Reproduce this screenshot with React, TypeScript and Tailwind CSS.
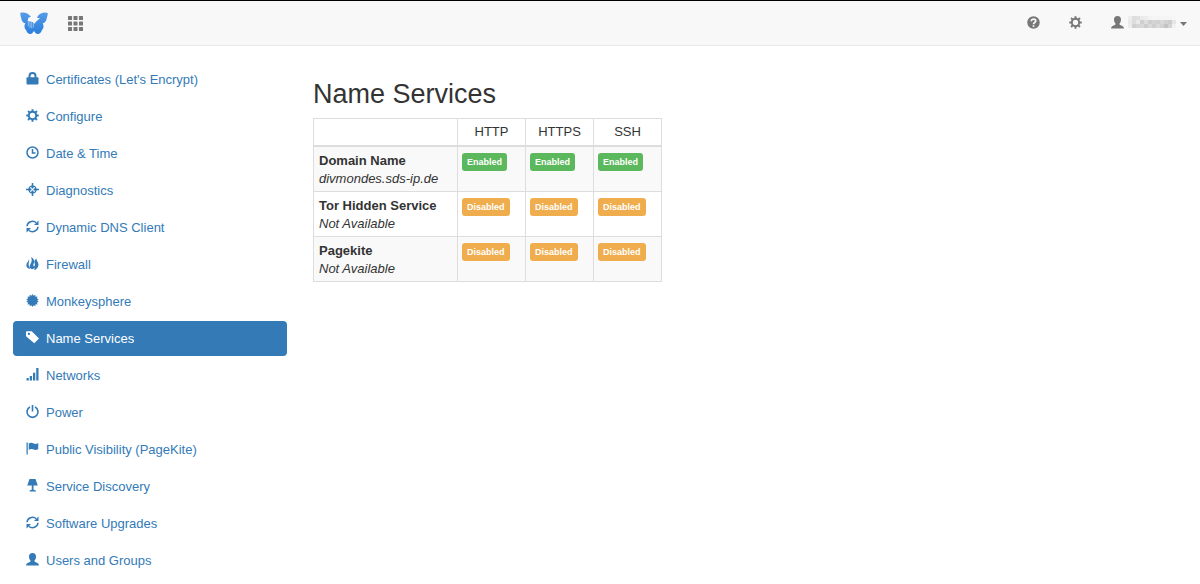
import React from "react";

type IconName =
  | "lock" | "cog" | "time" | "screenshot" | "refresh" | "fire" | "certificate" | "tag"
  | "signal" | "off" | "flag" | "lamp" | "user" | "question" | "grid";

const burst = Array.from({ length: 28 }, (_, i) => {
  const r = i % 2 === 0 ? 13 : 9.5;
  const a = (i * Math.PI) / 14;
  return `${(13 + r * Math.sin(a)).toFixed(2)},${(13 - r * Math.cos(a)).toFixed(2)}`;
}).join(" ");

const shapes: Record<IconName, React.ReactNode> = {
  lock: (
    <>
      <rect x="1" y="10.5" width="24" height="14.5" rx="2" />
      <path d="M7 12V8a6 6 0 0 1 12 0V12" fill="none" stroke="currentColor" strokeWidth="4" />
    </>
  ),
  cog: (
    <g fill="none" stroke="currentColor">
      <circle cx="13" cy="13" r="7.4" strokeWidth="4" />
      {[0, 45, 90, 135, 180, 225, 270, 315].map((a) => (
        <path key={a} d="M13 .5v5" strokeWidth="4" transform={`rotate(${a} 13 13)`} />
      ))}
    </g>
  ),
  time: (
    <g fill="none" stroke="currentColor">
      <circle cx="13" cy="13" r="11" strokeWidth="3" />
      <path d="M13 6v8h6" strokeWidth="3" />
    </g>
  ),
  screenshot: (
    <>
      <circle cx="13" cy="13" r="7" fill="none" stroke="currentColor" strokeWidth="2.4" />
      <path d="M11.500 0h3v5l2 2-2.500 4h-2L9.500 7l2-2zM11.500 26h3v-5l2-2-2.500-4h-2l-2.500 4 2 2zM0 11.500v3h5l2 2 4-2.500v-2L7 9.500l-2 2zM26 11.500v3h-5l-2 2-4-2.500v-2l4-2.500 2 2z" />
    </>
  ),
  refresh: (
    <>
      <path d="M2 12.500A11 10.500 0 0 1 20.500 5.500M24 13.500A11 10.500 0 0 1 5.500 20.500" fill="none" stroke="currentColor" strokeWidth="3" />
      <path d="M25 1v9h-9zM1 25v-9h9z" />
    </>
  ),
  fire: (
    <path d="M10 0c6 3 8 8 5.500 13-1.500 3-1 4.500.5 6 2-1.500 2.500-4 1-7-.5-3.500.5-7 4-9 0 3 1 4.500 2.500 7 3 5 1.500 11-4.500 15.500h-3c1-1.500 1.500-3 1.200-4.500-1.200 2-3 3.200-5.200 3.500-4.500-1.500-5.500-4.500-4-8.500C10.500 11.500 13 7.500 10 0zM6 4c1.500 4-1 7-.8 11 .2 3.500 2.300 6 3.300 9C3 23 0 19.500.8 14.500 1.500 10.500 6 9 6 4z" />
  ),
  certificate: <polygon points={burst} />,
  tag: <path fillRule="evenodd" d="M0 2.500A2 2 0 0 1 2 .5h9.500L26 15l-9.500 9.500L0 10.500zM5.800 3.500a2.300 2.300 0 1 0 0 4.600 2.300 2.300 0 0 0 0-4.600z" />,
  signal: <path d="M1 20h4.500v5H1zM7.500 16h4.500v9H7.500zM14 9.500h4.500V25H14zM20.500 0H25v25h-4.500z" />,
  off: (
    <g fill="none" stroke="currentColor" strokeWidth="3.200">
      <path d="M8 4a11 11 0 1 0 10 0" />
      <path d="M13 0v13" />
    </g>
  ),
  flag: <path d="M1 1h2.500v24H1zM5.500 3c4-2.500 7-1.500 10 0s6 1 9-1v12c-3 2-6 2.500-9 1s-6-2-10 .5z" />,
  lamp: <path d="M7 0h12l4.500 13H15v8.500c3.500.3 5 1.500 5 3.500H7c0-2 1.500-3.200 4.500-3.500V13h-9z" />,
  user: <path d="M13 0c4.500 0 7 2.500 7 7 0 3.500-1 6-3 8 0 2 .5 3 2.500 3.600 4 1.400 6 3 6.500 6.400H0c.5-3.400 2.500-5 6.500-6.400C8.500 18 9 17 9 15c-2-2-3-4.500-3-8 0-4.500 2.500-7 7-7z" />,
  question: (
    <>
      <circle cx="13" cy="13" r="12.500" />
      <path d="M8.500 10.500c0-6 9-5.500 9-.5 0 3-4.500 3-4.500 6.500" fill="none" stroke="#f8f8f8" strokeWidth="3.400" />
      <path d="M11.300 18.500h3.500v3.300h-3.500z" fill="#f8f8f8" />
    </>
  ),
  grid: (
    <>
      {[0, 9.5, 19].map((y) =>
        [0, 9.5, 19].map((x) => <rect key={`${x}-${y}`} x={x} y={y} width="7" height="7" rx="1" />)
      )}
    </>
  ),
};

function Icon({ name, className = "size-[13px]" }: { name: IconName; className?: string }) {
  return (
    <svg viewBox="0 0 26 26" fill="currentColor" aria-hidden="true" className={`shrink-0 overflow-visible ${className}`}>
      {shapes[name]}
    </svg>
  );
}

function Logo() {
  return (
    <svg viewBox="0 0 84 66" aria-hidden="true" className="h-[22px] w-7">
      <defs>
        <linearGradient id="wing" x1="0" y1="0" x2="0" y2="1">
          <stop offset="0" stopColor="#569ce6" />
          <stop offset="1" stopColor="#2a7edc" />
        </linearGradient>
      </defs>
      <path
        fill="url(#wing)"
        d="M1 3C11-1 25 4 33 14L25 17 23 27 38 30 43 35 50 27 60 19 51 17 54 11C62 3 74-1 83 3C84 10 80 18 79 24C77 30 73 33 68 34C73 42 70 50 66 54C62 66 52 69 46 62L42 57 38 62C32 69 22 66 18 54C14 50 11 42 16 34C11 33 7 30 5 24C4 18 0 10 1 3z"
      />
      <path d="M25 26v17M30 28v20M35 30v19M40 33v14" stroke="#c4dcf8" strokeWidth="1.800" fill="none" />
    </svg>
  );
}

const mask = [
  ["#eeeeee", "#dedede", "#e0e0e0", "#ebebeb", "#ededed", "#f3f3f3", "#f5f5f5", "#f5f5f5", "#f5f5f5", "#f5f5f5", "#f5f5f5", "#f6f6f6"],
  ["#e9e9e9", "#dddddd", "#e9e9e9", "#cfcfcf", "#dddddd", "#cfcfcf", "#d4d4d4", "#d0d0d0", "#d8d8d8", "#d2d2d2", "#cccccc", "#e6e6e6"],
  ["#ececec", "#d0d0d0", "#d5d5d5", "#d8d8d8", "#cccccc", "#d9d9d9", "#cfcfcf", "#dadada", "#d2d2d2", "#c3c3c3", "#d4d4d4", "#f1f1f1"],
];

function HiddenName() {
  return (
    <svg viewBox="0 0 48 12" role="img" aria-label="User" className="h-3 w-12">
      {mask.map((row, y) => row.map((c, x) => <rect key={`${x}-${y}`} x={x * 4} y={y * 4} width="4" height="4" fill={c} />))}
    </svg>
  );
}

const items: { icon: IconName; label: string; active?: boolean }[] = [
  { icon: "lock", label: "Certificates (Let's Encrypt)" },
  { icon: "cog", label: "Configure" },
  { icon: "time", label: "Date & Time" },
  { icon: "screenshot", label: "Diagnostics" },
  { icon: "refresh", label: "Dynamic DNS Client" },
  { icon: "fire", label: "Firewall" },
  { icon: "certificate", label: "Monkeysphere" },
  { icon: "tag", label: "Name Services", active: true },
  { icon: "signal", label: "Networks" },
  { icon: "off", label: "Power" },
  { icon: "flag", label: "Public Visibility (PageKite)" },
  { icon: "lamp", label: "Service Discovery" },
  { icon: "refresh", label: "Software Upgrades" },
  { icon: "user", label: "Users and Groups" },
];

const services = [
  { type: "Domain Name", name: "divmondes.sds-ip.de", enabled: true },
  { type: "Tor Hidden Service", name: "Not Available", enabled: false },
  { type: "Pagekite", name: "Not Available", enabled: false },
];

const protocols = ["HTTP", "HTTPS", "SSH"];

function Status({ enabled }: { enabled: boolean }) {
  return (
    <span
      className={`block w-fit rounded-[3px] px-[5px] text-[9px] font-bold leading-[18px] text-white ${
        enabled ? "bg-[#5cb85c]" : "bg-[#f0ad4e]"
      }`}
    >
      {enabled ? "Enabled" : "Disabled"}
    </span>
  );
}

export default function App() {
  return (
    <div className="bg-white font-['Liberation_Sans',Arial,sans-serif] text-[13px] leading-[18px] text-[#333]">
      <header className="flex h-[46px] items-center justify-between border-t border-b border-t-black border-b-[#e7e7e7] bg-[#f8f8f8] pr-3 pl-5 text-[#777]">
        <nav aria-label="Main" className="flex items-center gap-5">
          <a href="#home" aria-label="FreedomBox"><Logo /></a>
          <a href="#apps" aria-label="Apps"><Icon name="grid" className="size-[15px]" /></a>
        </nav>
        <nav aria-label="Account" className="flex items-center pb-0.5">
          <a href="#help" aria-label="Help" className="mr-[29px]"><Icon name="question" /></a>
          <a href="#system" aria-label="System" className="mr-[29px]"><Icon name="cog" /></a>
          <button type="button" className="flex items-center gap-1">
            <Icon name="user" />
            <HiddenName />
            <svg viewBox="0 0 8 4" aria-hidden="true" className="mt-1 h-1 w-2"><path d="M0 0h7L3.500 4z" fill="currentColor" /></svg>
          </button>
        </nav>
      </header>

      <div className="flex pt-4">
        <nav aria-label="System" className="w-1/4 px-[13px]">
          <ul className="flex flex-col gap-0.5">
            {items.map((item) => (
              <li key={item.label}>
                <a
                  href="#section"
                  aria-current={item.active ? "page" : undefined}
                  className={`flex h-[35px] items-center gap-[7px] rounded px-[13px] ${
                    item.active ? "bg-[#337ab7] text-white" : "text-[#337ab7]"
                  }`}
                >
                  <Icon name={item.icon} className="mb-0.5 size-[13px]" />
                  <span>{item.label}</span>
                </a>
              </li>
            ))}
          </ul>
        </nav>

        <main className="w-3/4 px-[13px] pt-4">
          <h1 className="mb-2 text-[27px] leading-8">Name Services</h1>
          <table className="w-[349px] table-fixed border-collapse border border-[#ddd]">
            <colgroup>
              <col className="w-[144px]" />
              <col />
              <col />
              <col />
            </colgroup>
            <thead>
              <tr>
                <td className="border border-b-2 border-[#ddd]" />
                {protocols.map((p) => (
                  <th key={p} scope="col" className="border border-b-2 border-[#ddd] p-1 font-normal">{p}</th>
                ))}
              </tr>
            </thead>
            <tbody>
              {services.map((s) => (
                <tr key={s.type} className="odd:bg-[#f9f9f9]">
                  <th scope="row" className="border border-[#ddd] px-[5px] pt-[5px] pb-[3px] text-left font-normal">
                    <b className="block">{s.type}</b>
                    <i className="block">{s.name}</i>
                  </th>
                  {protocols.map((p) => (
                    <td key={p} className="border border-[#ddd] px-1 pt-1.5 pb-1 align-top">
                      <Status enabled={s.enabled} />
                    </td>
                  ))}
                </tr>
              ))}
            </tbody>
          </table>
        </main>
      </div>
    </div>
  );
}
